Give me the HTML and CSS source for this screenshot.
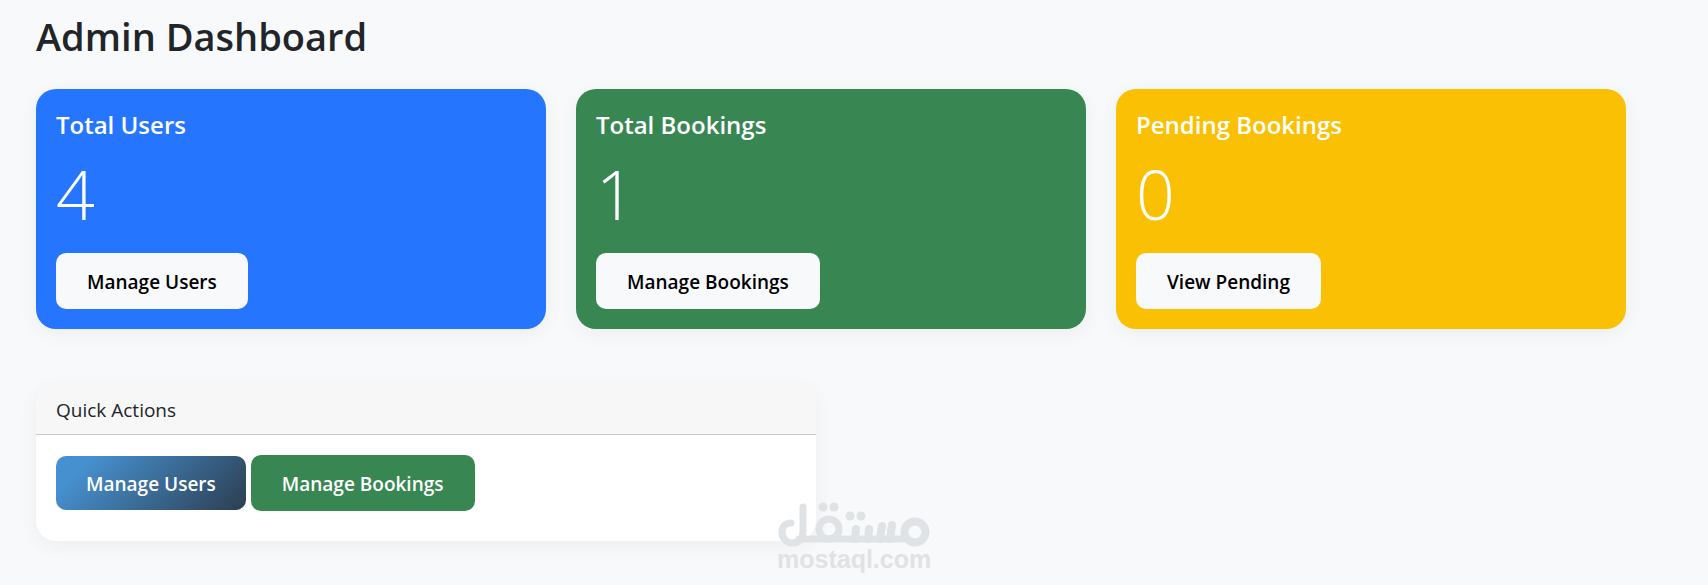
FILE: index.html
```html
<!DOCTYPE html>
<html lang="en">
<head>
<meta charset="utf-8">
<meta name="viewport" content="width=device-width, initial-scale=1">
<title>Admin Dashboard</title>
<link rel="stylesheet" href="styles.css">
</head>
<body>
<main class="dashboard">
  <h1 class="page-title">Admin Dashboard</h1>
  <section class="stats">
    <article class="card stat stat-blue">
      <h2 class="stat-title">Total Users</h2>
      <p class="stat-value">4</p>
      <a class="btn btn-light" href="#users">Manage Users</a>
    </article>
    <article class="card stat stat-green">
      <h2 class="stat-title">Total Bookings</h2>
      <p class="stat-value">1</p>
      <a class="btn btn-light" href="#bookings">Manage Bookings</a>
    </article>
    <article class="card stat stat-yellow">
      <h2 class="stat-title">Pending Bookings</h2>
      <p class="stat-value">0</p>
      <a class="btn btn-light" href="#pending">View Pending</a>
    </article>
  </section>
  <section class="panels">
    <article class="card panel">
      <h2 class="panel-header">Quick Actions</h2>
      <div class="panel-body">
        <a class="btn btn-gradient" href="#users">Manage Users</a>
        <a class="btn btn-green" href="#bookings">Manage Bookings</a>
      </div>
    </article>
  </section>
</main>
<div class="watermark">
  <svg class="watermark-logo" viewBox="0 0 154 46" fill="none" stroke="currentColor" stroke-width="7" stroke-linecap="round" role="img" aria-label="مستقل">
    <path d="M14 21C8 21 5 25 5 30C5 37 10 41 15 41C22 41 26 37 26 29V5"/>
    <path d="M22 37H128"/>
    <circle cx="52" cy="27" r="10"/>
    <circle cx="138" cy="30" r="10.500" stroke-width="8"/>
    <path stroke-width="8" d="M78 37L79 27M91 37L92 27M103 37L105 24M113 37L115 23"/>
    <g fill="currentColor" stroke="none"><circle cx="46" cy="5" r="4.500"/><circle cx="57" cy="5" r="4.500"/><circle cx="73" cy="14" r="4.500"/><circle cx="84" cy="14" r="4.500"/></g>
  </svg>
  <span class="watermark-text">mostaql.com</span>
</div>
</body>
</html>
```
FILE: styles.css
```css
* { box-sizing: border-box; }
body {
  margin: 0;
  background: #f8f9fb;
  color: #212529;
  font-family: "Segoe UI", "Open Sans", "Noto Sans", sans-serif;
  font-size: 19px;
  line-height: 28px;
}
.dashboard { padding: 12px 82px 44px 36px; }
.page-title {
  margin: 0 0 29px;
  font-size: 38px;
  font-weight: 600;
  line-height: 48px;
}
.stats { display: grid; grid-template-columns: repeat(3, 1fr); gap: 30px; }
.panels { display: grid; grid-template-columns: repeat(2, 1fr); gap: 30px; margin-top: 55px; }
.card { border-radius: 20px; box-shadow: 0 5px 20px rgba(0, 0, 0, 0.05); }
.stat { padding: 20px; color: #fff; }
.stat-blue { background: #2575ff; }
.stat-green { background: #388753; }
.stat-yellow { background: #fac003; }
.stat-title { margin: 0 0 12px; font-size: 24px; font-weight: 600; line-height: 32px; }
.stat-value { margin: 0 0 18px; font-size: 68px; font-weight: 300; line-height: 82px; }
.btn {
  display: inline-block;
  padding: 14px 30px 12px;
  border: 1px solid transparent;
  border-radius: 10px;
  font-weight: 600;
  text-decoration: none;
  vertical-align: middle;
}
.btn-light { background: #f8f9fb; color: #000; }
.btn-gradient { border: 0; background: linear-gradient(135deg, #4690cf 15%, #2c3e50); color: #fff; }
.btn-green { background: #388753; color: #fff; }
.panel { overflow: hidden; background: #fff; }
.panel-header {
  margin: 0;
  padding: 12px 20px 10px;
  border-bottom: 1px solid #c4cccc;
  background: #f7f7f7;
  font-size: 19px;
  font-weight: 400;
  line-height: 28px;
}
.panel-body { padding: 20px 20px 30px; }
.watermark {
  position: absolute;
  top: 502px;
  left: 50%;
  width: 154px;
  transform: translateX(-50%);
  color: #dfe3e5;
}
.watermark-logo { display: block; width: 154px; height: 46px; }
.watermark-text { display: block; font: bold 25px/22px "Liberation Sans", Arial, sans-serif; }
```
